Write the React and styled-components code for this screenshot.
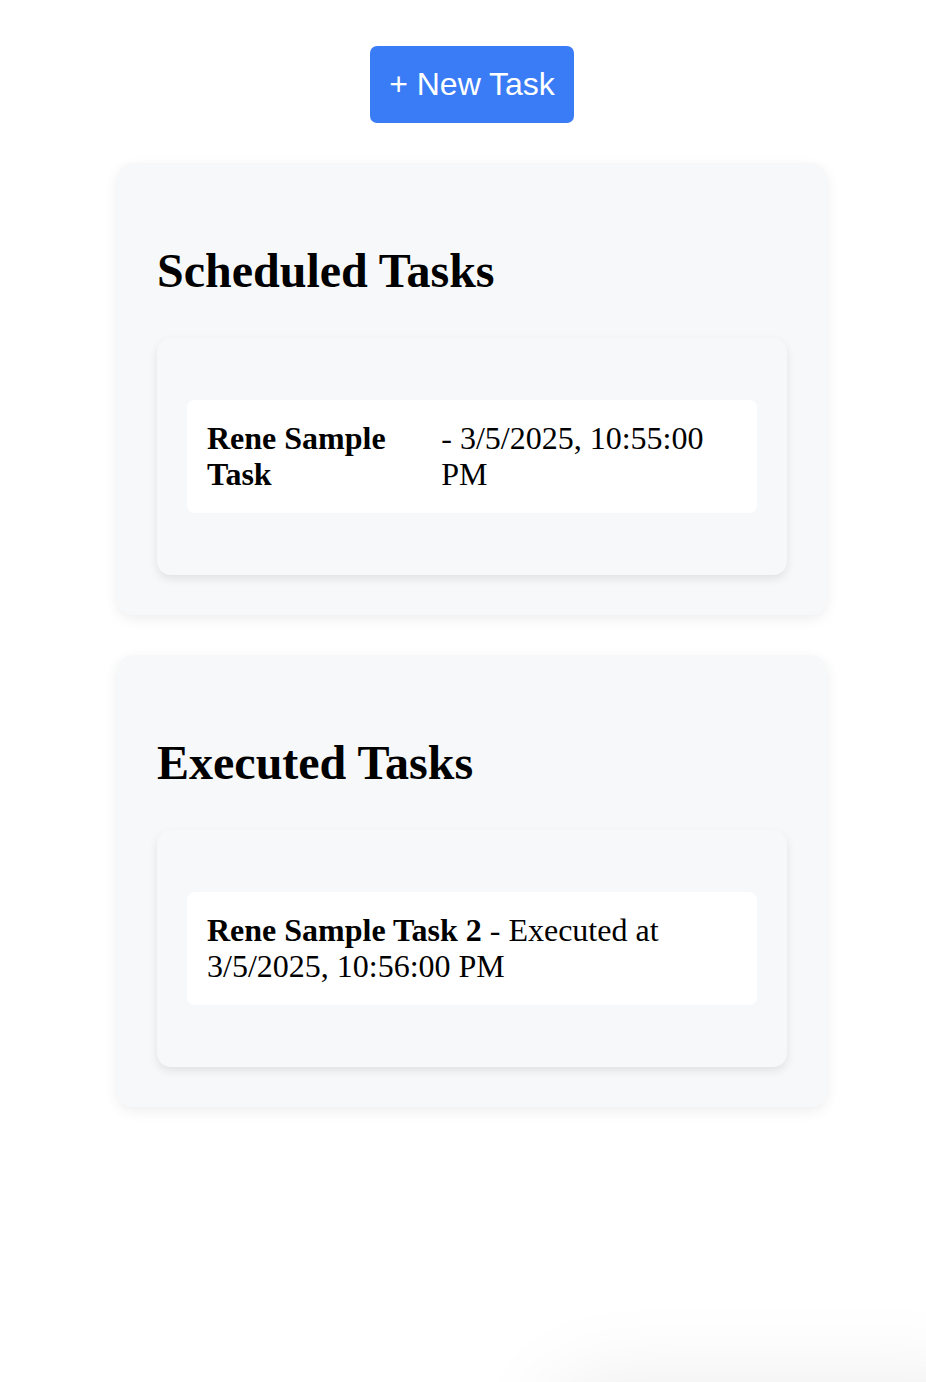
import React from "react";
import styled, { createGlobalStyle } from "styled-components";

const Global = createGlobalStyle`
  html, body { margin: 0; padding: 0; background: #ffffff; }
  body { font-family: "Liberation Serif", "Times New Roman", serif; color: #000; }
`;

const Page = styled.div`
  padding: 46px 0 80px 18px;
  display: flex;
  flex-direction: column;
  align-items: center;
`;

const Column = styled.div`
  width: 710px;
  display: flex;
  flex-direction: column;
  align-items: center;
  gap: 40px;
`;

const NewButton = styled.button`
  background: #3a7cf6;
  color: #ffffff;
  border: none;
  border-radius: 7px;
  font-family: "Liberation Sans", Arial, sans-serif;
  font-size: 32px;
  line-height: 35px;
  padding: 21px 19px;
  cursor: pointer;
`;

const Section = styled.section`
  align-self: stretch;
  background: #f7f8f9;
  border-radius: 16px;
  padding: 40px;
  box-shadow: 0 4px 14px rgba(0, 0, 0, 0.07);
`;

const Heading = styled.h2`
  font-size: 48px;
  font-weight: 700;
  margin: 39.5px 0 40px;
`;

const Panel = styled.div`
  background: #f7f8f9;
  border-radius: 14px;
  padding: 30px;
  box-shadow: 0 4px 10px rgba(0, 0, 0, 0.09);
`;

const List = styled.ul`
  list-style: none;
  margin: 32px 0;
  padding: 0;
`;

const Row = styled.li`
  background: #ffffff;
  border-radius: 8px;
  padding: 20px;
  font-size: 32px;
  line-height: 1.15;
  display: ${(p) => (p.$split ? "flex" : "block")};
  justify-content: space-between;
`;

const Corner = styled.div`
  position: fixed;
  right: -80px;
  bottom: -110px;
  width: 460px;
  height: 110px;
  border-radius: 60px;
  background: #ffffff;
  box-shadow: 0 0 90px rgba(0, 0, 0, 0.08);
`;

export default function App() {
  return (
    <>
      <Global />
      <Page>
        <Column>
          <NewButton>+ New Task</NewButton>
          <Section>
            <Heading>Scheduled Tasks</Heading>
            <Panel>
              <List>
                <Row $split>
                  <strong>Rene Sample Task</strong>
                  <span>- 3/5/2025, 10:55:00 PM</span>
                </Row>
              </List>
            </Panel>
          </Section>
          <Section>
            <Heading>Executed Tasks</Heading>
            <Panel>
              <List>
                <Row>
                  <strong>Rene Sample Task 2</strong> - Executed at 3/5/2025, 10:56:00 PM
                </Row>
              </List>
            </Panel>
          </Section>
        </Column>
      </Page>
      <Corner />
    </>
  );
}
